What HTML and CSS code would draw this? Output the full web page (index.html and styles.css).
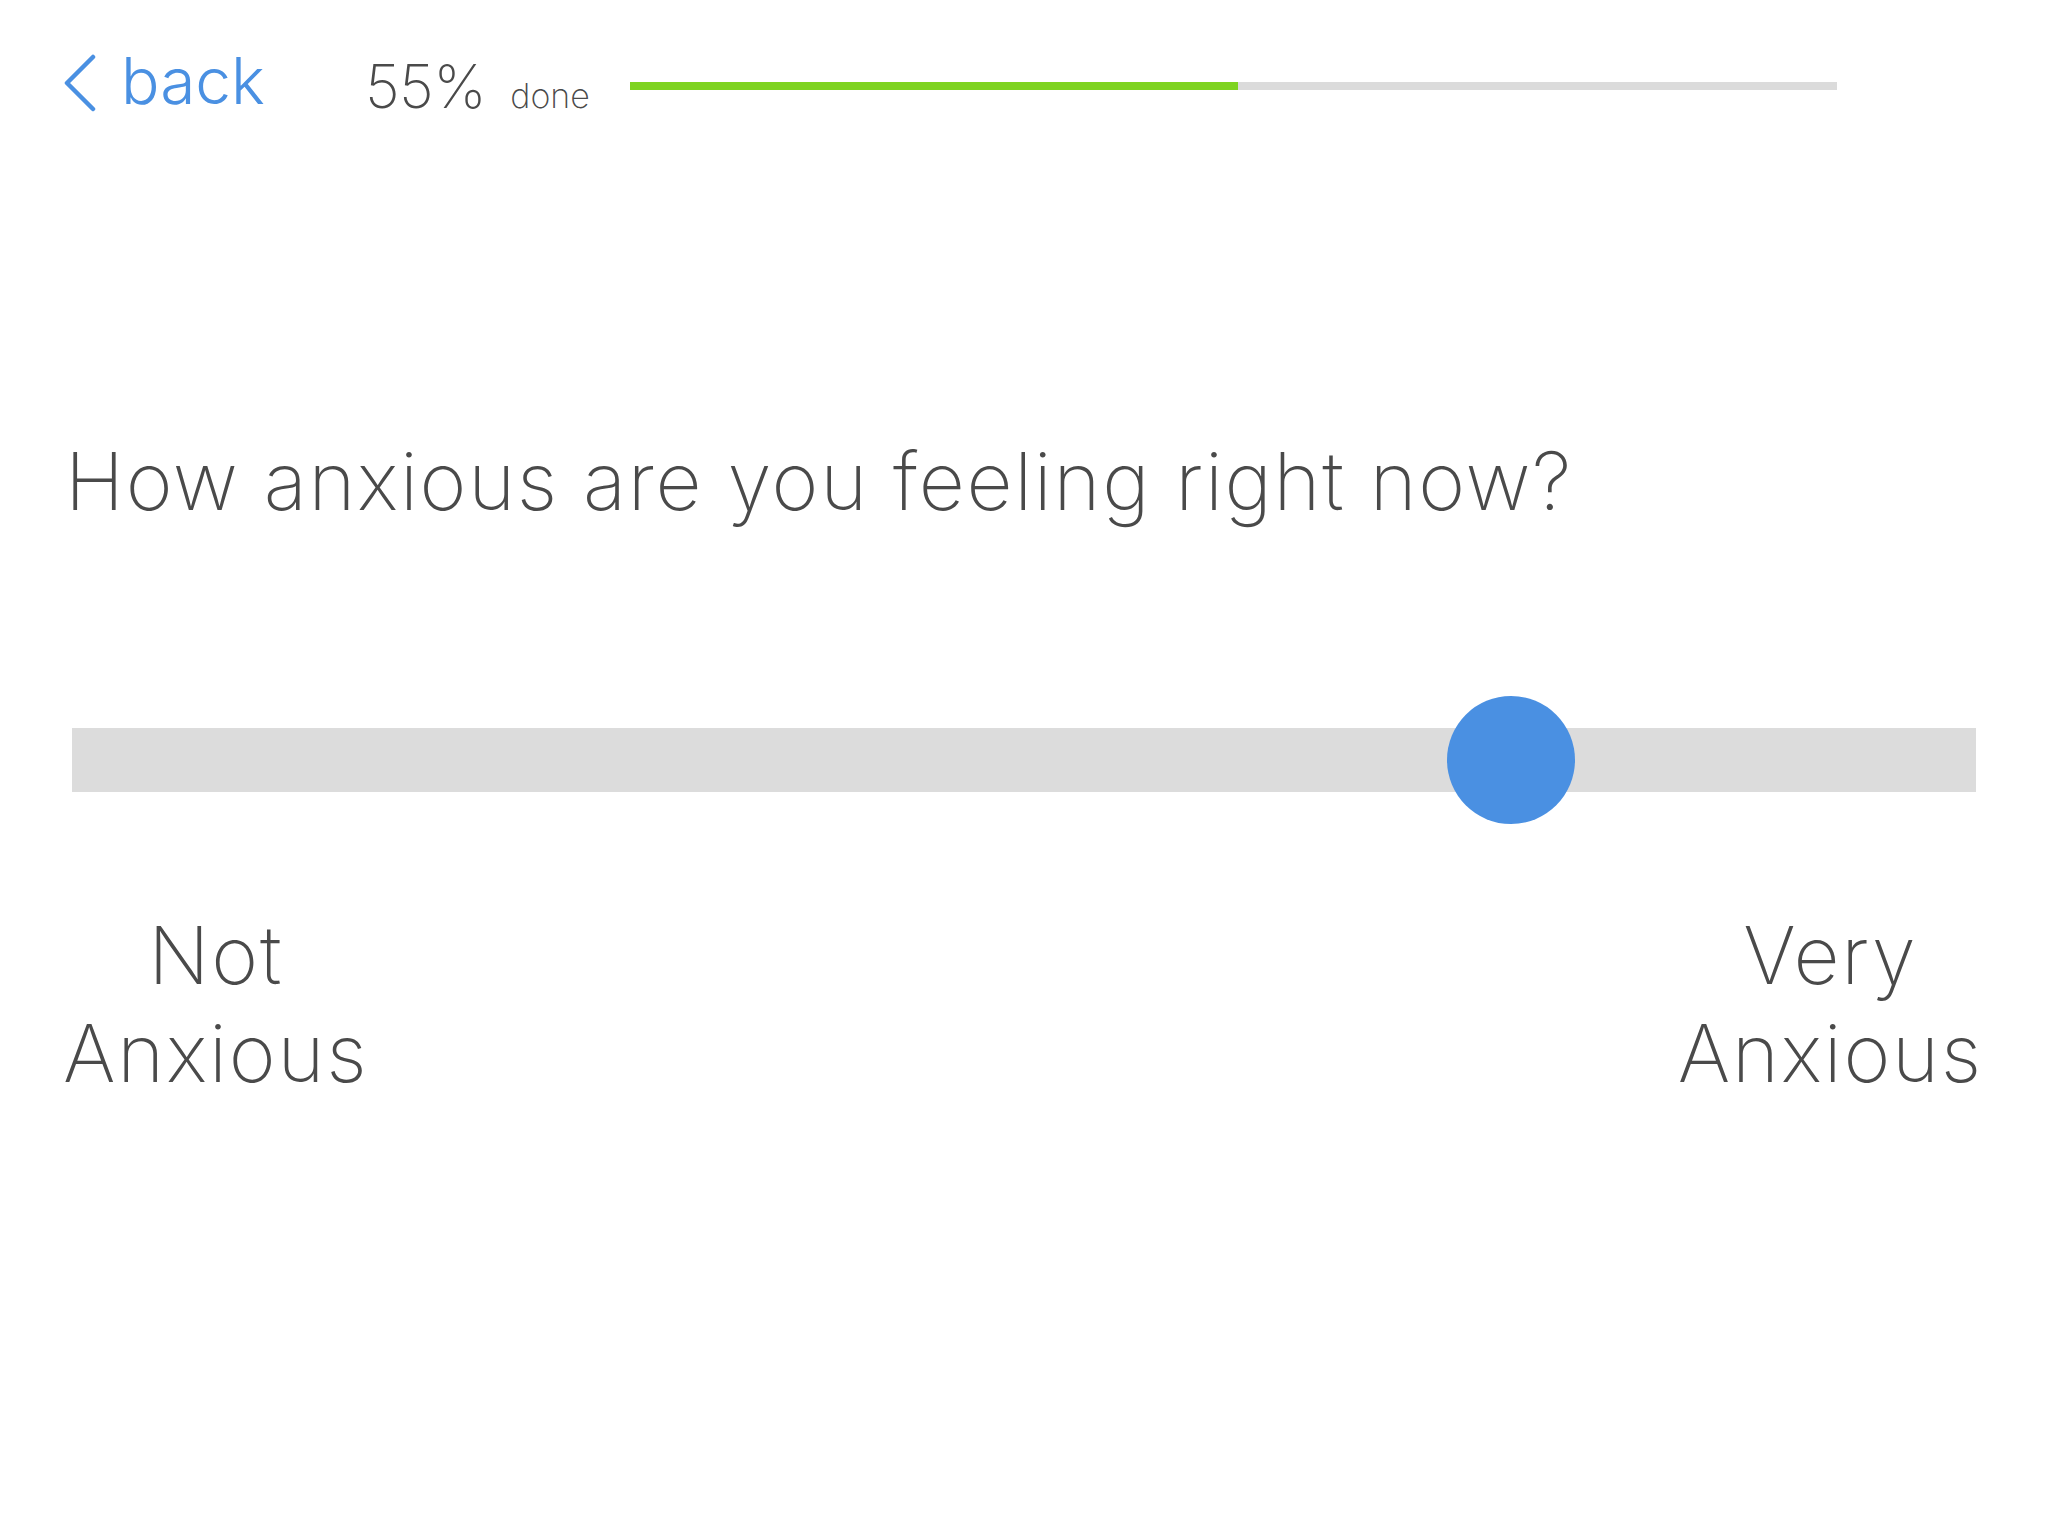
FILE: index.html
```html
<!DOCTYPE html>
<html lang="en">
<head>
<meta charset="utf-8">
<title>Anxiety check-in</title>
<link rel="stylesheet" href="styles.css">
</head>
<body>
<main class="page">
  <header class="topbar">
    <a class="back" href="#">
      <svg class="back-icon" width="34" height="58" viewBox="0 0 34 58" aria-hidden="true">
        <polyline points="30,3 4,29 30,55" fill="none" stroke="#4a90e2" stroke-width="4.5" stroke-linecap="round" stroke-linejoin="round"/>
      </svg>
      <span class="back-text">back</span>
    </a>
    <span class="percent">55%</span>
    <span class="done">done</span>
    <div class="progress"><div class="progress-fill" style="width: 608px"></div></div>
  </header>

  <h1 class="question">How anxious are you feeling right now?</h1>

  <div class="slider">
    <div class="track">
      <div class="thumb" style="left: calc(75.6% - 64px)"></div>
    </div>
  </div>

  <div class="labels">
    <div class="label">Not<br>Anxious</div>
    <div class="label">Very<br>Anxious</div>
  </div>
</main>
</body>
</html>
```

FILE: styles.css
```css
html, body {
  margin: 0;
  padding: 0;
  background: #ffffff;
}

body {
  font-family: Inter, "Noto Sans", "Liberation Sans", sans-serif;
  font-weight: 200;
  color: #4a4a4a;
}

.page {
  width: 2048px;
  height: 1536px;
  box-sizing: border-box;
  padding: 49px 69px 0 63px;
}

.topbar {
  display: flex;
  align-items: flex-start;
}

.back {
  display: flex;
  align-items: flex-start;
  color: #4a90e2;
  text-decoration: none;
}

.back-icon {
  display: block;
  margin-top: 5px;
  margin-right: 24px;
}

.back-text {
  font-size: 64px;
  line-height: 1;
  font-weight: 300;
}

.percent {
  font-size: 60px;
  line-height: 1;
  letter-spacing: -0.5px;
  margin-top: 7px;
  margin-left: 100px;
}

.done {
  font-size: 34px;
  line-height: 1;
  margin-top: 30px;
  margin-left: 24px;
}

.progress {
  width: 1207px;
  height: 8px;
  margin-top: 33px;
  margin-left: 40px;
  background: #dbdbdb;
}

.progress-fill {
  height: 100%;
  background: #7ed321;
}

.question {
  margin: 325px 0 0 2px;
  font-size: 80px;
  line-height: 1;
  font-weight: 200;
  letter-spacing: 1.7px;
}

.slider {
  margin-top: 175px;
  height: 128px;
  display: flex;
  align-items: center;
}

.track {
  position: relative;
  flex: 1;
  height: 64px;
  margin: 0 3px 0 9px;
  background: #dcdcdc;
}

.thumb {
  position: absolute;
  top: -32px;
  width: 128px;
  height: 128px;
  border-radius: 50%;
  background: #4a90e2;
}

.labels {
  margin-top: 82px;
  margin-right: -4px;
  display: flex;
  justify-content: space-between;
}

.label {
  font-size: 80px;
  line-height: 98px;
  text-align: center;
  letter-spacing: 1.8px;
}
```
